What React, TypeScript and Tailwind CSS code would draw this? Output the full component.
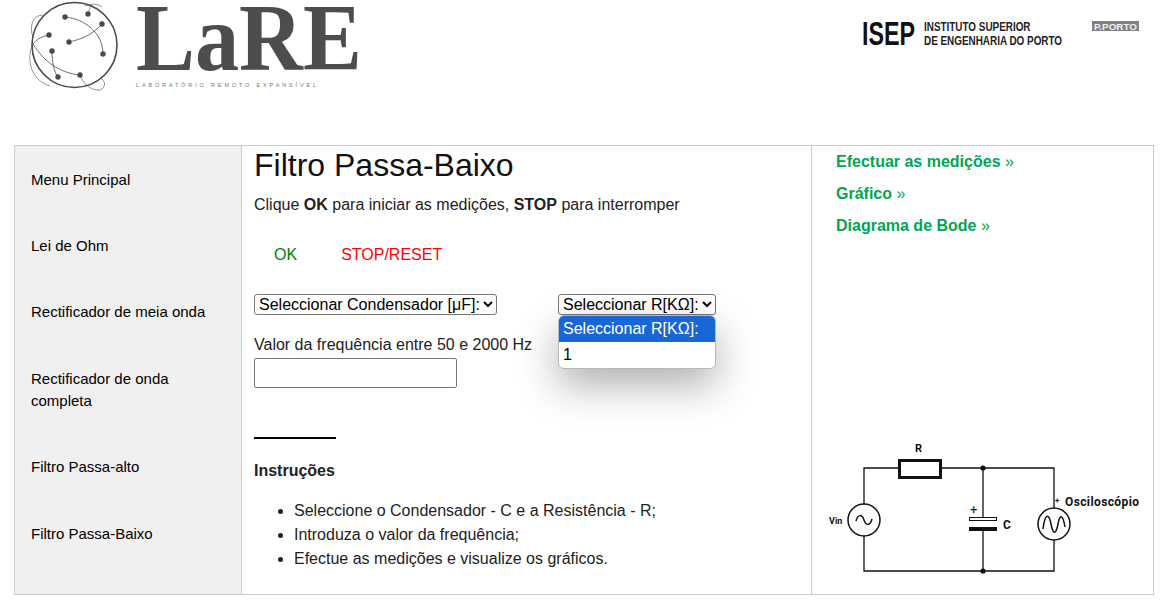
const menuItems = [
  ["Menu Principal"],
  ["Lei de Ohm"],
  ["Rectificador de meia onda"],
  ["Rectificador de onda", "completa"],
  ["Filtro Passa-alto"],
  ["Filtro Passa-Baixo"],
];

const sideLinks = ["Efectuar as medições", "Gráfico", "Diagrama de Bode"];

const LareLogo = () => (
  <svg width="400" height="110" viewBox="0 0 400 110" className="block">
    <g fill="none" stroke="#4a4a4a">
      <circle cx="74.5" cy="45" r="42.5" strokeWidth="1.6" />
      <path d="M43 15C33 15 29 25 33 38" strokeWidth="0.6" />
      <path d="M33 44C26 58 30 80 50 86" strokeWidth="0.6" />
      <path d="M85 6C90 4 98 3 102 7" strokeWidth="0.6" />
      <path d="M88 14C89 10 90 8 91 5" strokeWidth="0.6" />
      <path d="M65 17C85 19 103 33 103 54" strokeWidth="0.8" />
      <path d="M69 42C82 39 92 35 102 24" strokeWidth="0.8" />
      <path d="M33 44C37 39 43 36 49 35" strokeWidth="0.8" />
      <path d="M33 44C44 62 60 73 80 75" strokeWidth="0.8" />
      <path d="M80 75C84 85 92 91 100 90C106 88 106 80 100 78" strokeWidth="0.6" />
      <path d="M52 51C52 62 54 72 58 77" strokeWidth="0.8" />
    </g>
    <g fill="#4a4a4a">
      <circle cx="65" cy="17" r="2.7" />
      <circle cx="88" cy="14" r="2.7" />
      <circle cx="102" cy="24" r="2.7" />
      <circle cx="49" cy="35" r="2.7" />
      <circle cx="69" cy="42" r="2.7" />
      <circle cx="52" cy="51" r="2.7" />
      <circle cx="103" cy="54" r="2.7" />
      <circle cx="58" cy="77" r="2.7" />
      <circle cx="80" cy="75" r="2.7" />
    </g>
    <text transform="translate(136 70) scale(0.93 1)" fill="#4d4d4d" fontFamily="Liberation Serif" fontSize="95" fontWeight="700">
      LaRE
    </text>
    <text x="136" y="87" fill="#777777" fontFamily="Liberation Sans" fontSize="5.5" textLength="180">
      LABORATÓRIO REMOTO EXPANSÍVEL
    </text>
  </svg>
);

const IsepLogo = () => (
  <svg width="329" height="70" viewBox="0 0 329 70" className="block">
    <text transform="translate(22 45) scale(0.706 1)" fill="#111111" fontFamily="Liberation Sans" fontSize="33" fontWeight="700">
      ISEP
    </text>
    <text transform="translate(84 31) scale(0.793 1)" fill="#222222" fontFamily="Liberation Sans" fontSize="12.5" fontWeight="700">
      INSTITUTO SUPERIOR
    </text>
    <text transform="translate(84 44.5) scale(0.793 1)" fill="#222222" fontFamily="Liberation Sans" fontSize="12.5" fontWeight="700">
      DE ENGENHARIA DO PORTO
    </text>
    <rect x="252" y="21" width="47" height="10" fill="#808080" />
    <text x="254" y="29.5" fill="#f2f2f2" fontFamily="Liberation Sans" fontSize="9" fontWeight="700" textLength="43" lengthAdjust="spacingAndGlyphs">
      P.PORTO
    </text>
  </svg>
);

const Circuit = () => (
  <svg width="340" height="164" viewBox="0 0 340 164" className="block">
    <g fill="none" stroke="#111111" strokeWidth="1.3">
      <path d="M52 74V38H87" />
      <path d="M129 38H242V78" />
      <path d="M242 110V141H52V106" />
      <path d="M171 38V87" />
      <path d="M171 100V141" />
      <rect x="87.5" y="30.5" width="41" height="17" strokeWidth="3" />
      <circle cx="52" cy="90" r="16" strokeWidth="1.5" />
      <circle cx="242" cy="94" r="16" strokeWidth="1.5" />
      <rect x="157.5" y="87.5" width="27" height="3" strokeWidth="1" />
      <path d="M44 91C46 84 50 84 52 90C54 96 58 96 60 89" strokeWidth="1.5" />
      <path d="M231 99C233 83 237 83 239 94C241 105 244 105 246 94C248 83 251 85 253 97" strokeWidth="1.5" />
    </g>
    <rect x="157" y="97" width="28" height="4" fill="#111111" />
    <circle cx="171" cy="38" r="2.6" fill="#111111" />
    <circle cx="171" cy="141" r="2.6" fill="#111111" />
    <g fill="#111111" fontFamily="Roboto" fontWeight="700">
      <text x="103" y="22" fontSize="11">R</text>
      <text x="17" y="94" fontSize="9">Vin</text>
      <text x="158" y="84" fontSize="13" fontWeight="400">+</text>
      <text x="191" y="99" fontSize="12">C</text>
      <text x="243" y="73" fontSize="8">+</text>
      <text x="253" y="76" fontSize="12" textLength="74">Osciloscópio</text>
    </g>
  </svg>
);

export default function App() {
  return (
    <div className="h-[615px] w-[1169px] overflow-hidden bg-white font-['Liberation_Sans',Arial,sans-serif] text-base text-black">
      <header className="flex h-[145px] items-start justify-between">
        <LareLogo />
        <IsepLogo />
      </header>

      <div className="ml-[14px] flex h-[450px] w-[1140px] border border-[#cccccc]">
        <nav className="flex w-[227px] shrink-0 flex-col gap-[22.4px] border-r border-[#cccccc] bg-[#f0f0f0] pl-4 pr-2 pt-[11.6px] text-[15px] leading-[22px]">
          {menuItems.map((lines) => (
            <a key={lines[0]} className="block py-[11px]">
              {lines.map((line) => (
                <div key={line}>{line}</div>
              ))}
            </a>
          ))}
        </nav>

        <main className="w-[570px] shrink-0 border-r border-[#cccccc] pl-3 pt-[1px] text-[#222222]">
          <h1 className="text-[32px] leading-9 text-[#111111]">Filtro Passa-Baixo</h1>
          <p className="mt-[11px] leading-[22px]">
            Clique <b>OK</b> para iniciar as medições, <b>STOP</b> para interromper
          </p>
          <div className="mt-[28px] flex h-[22px] items-center gap-[44px] pl-5 leading-[22px]">
            <span className="text-[#008000]">OK</span>
            <span className="text-[#ff0000]">STOP/RESET</span>
          </div>

          <div className="relative mt-[28px] flex h-[21px] items-center gap-[61px]">
            <select className="h-[21px] rounded-[3px] border border-[#767676] bg-white text-base text-black">
              <option>Seleccionar Condensador [μF]:</option>
            </select>
            <select className="h-[21px] rounded-[3px] border border-[#767676] bg-white text-base text-black">
              <option>Seleccionar R[KΩ]:</option>
            </select>
            <div className="absolute left-[304px] top-[21px] z-10 w-[158px] overflow-hidden rounded-[6px] border border-[#b8b8b8] bg-white leading-[26px] text-black shadow-[0_16px_40px_rgba(0,0,0,0.32)]">
              <div className="bg-[#1a66d2] pl-1 text-white">Seleccionar R[KΩ]:</div>
              <div className="pl-1">1</div>
            </div>
          </div>

          <p className="mt-[19px] leading-[22px]">Valor da frequência entre 50 e 2000 Hz</p>
          <input type="text" className="mt-[2px] block h-[30px] w-[203px] rounded-[2px] border border-[#767676] bg-white" />

          <hr className="mt-[49px] w-[82px] border-t-2 border-black" />

          <h3 className="mt-[21px] font-bold leading-[22px]">Instruções</h3>
          <ul className="mt-[17px] list-disc pl-10 leading-6">
            <li>Seleccione o Condensador - C e a Resistência - R;</li>
            <li>Introduza o valor da frequência;</li>
            <li>Efectue as medições e visualize os gráficos.</li>
          </ul>
        </main>

        <aside className="flex min-w-0 flex-1 flex-col justify-between">
          <div className="flex flex-col gap-[10px] pl-6 pt-[5px] leading-[22px] text-[#00a651]">
            {sideLinks.map((link) => (
              <a key={link}>
                <b>{link}</b> »
              </a>
            ))}
          </div>
          <Circuit />
        </aside>
      </div>
    </div>
  );
}
